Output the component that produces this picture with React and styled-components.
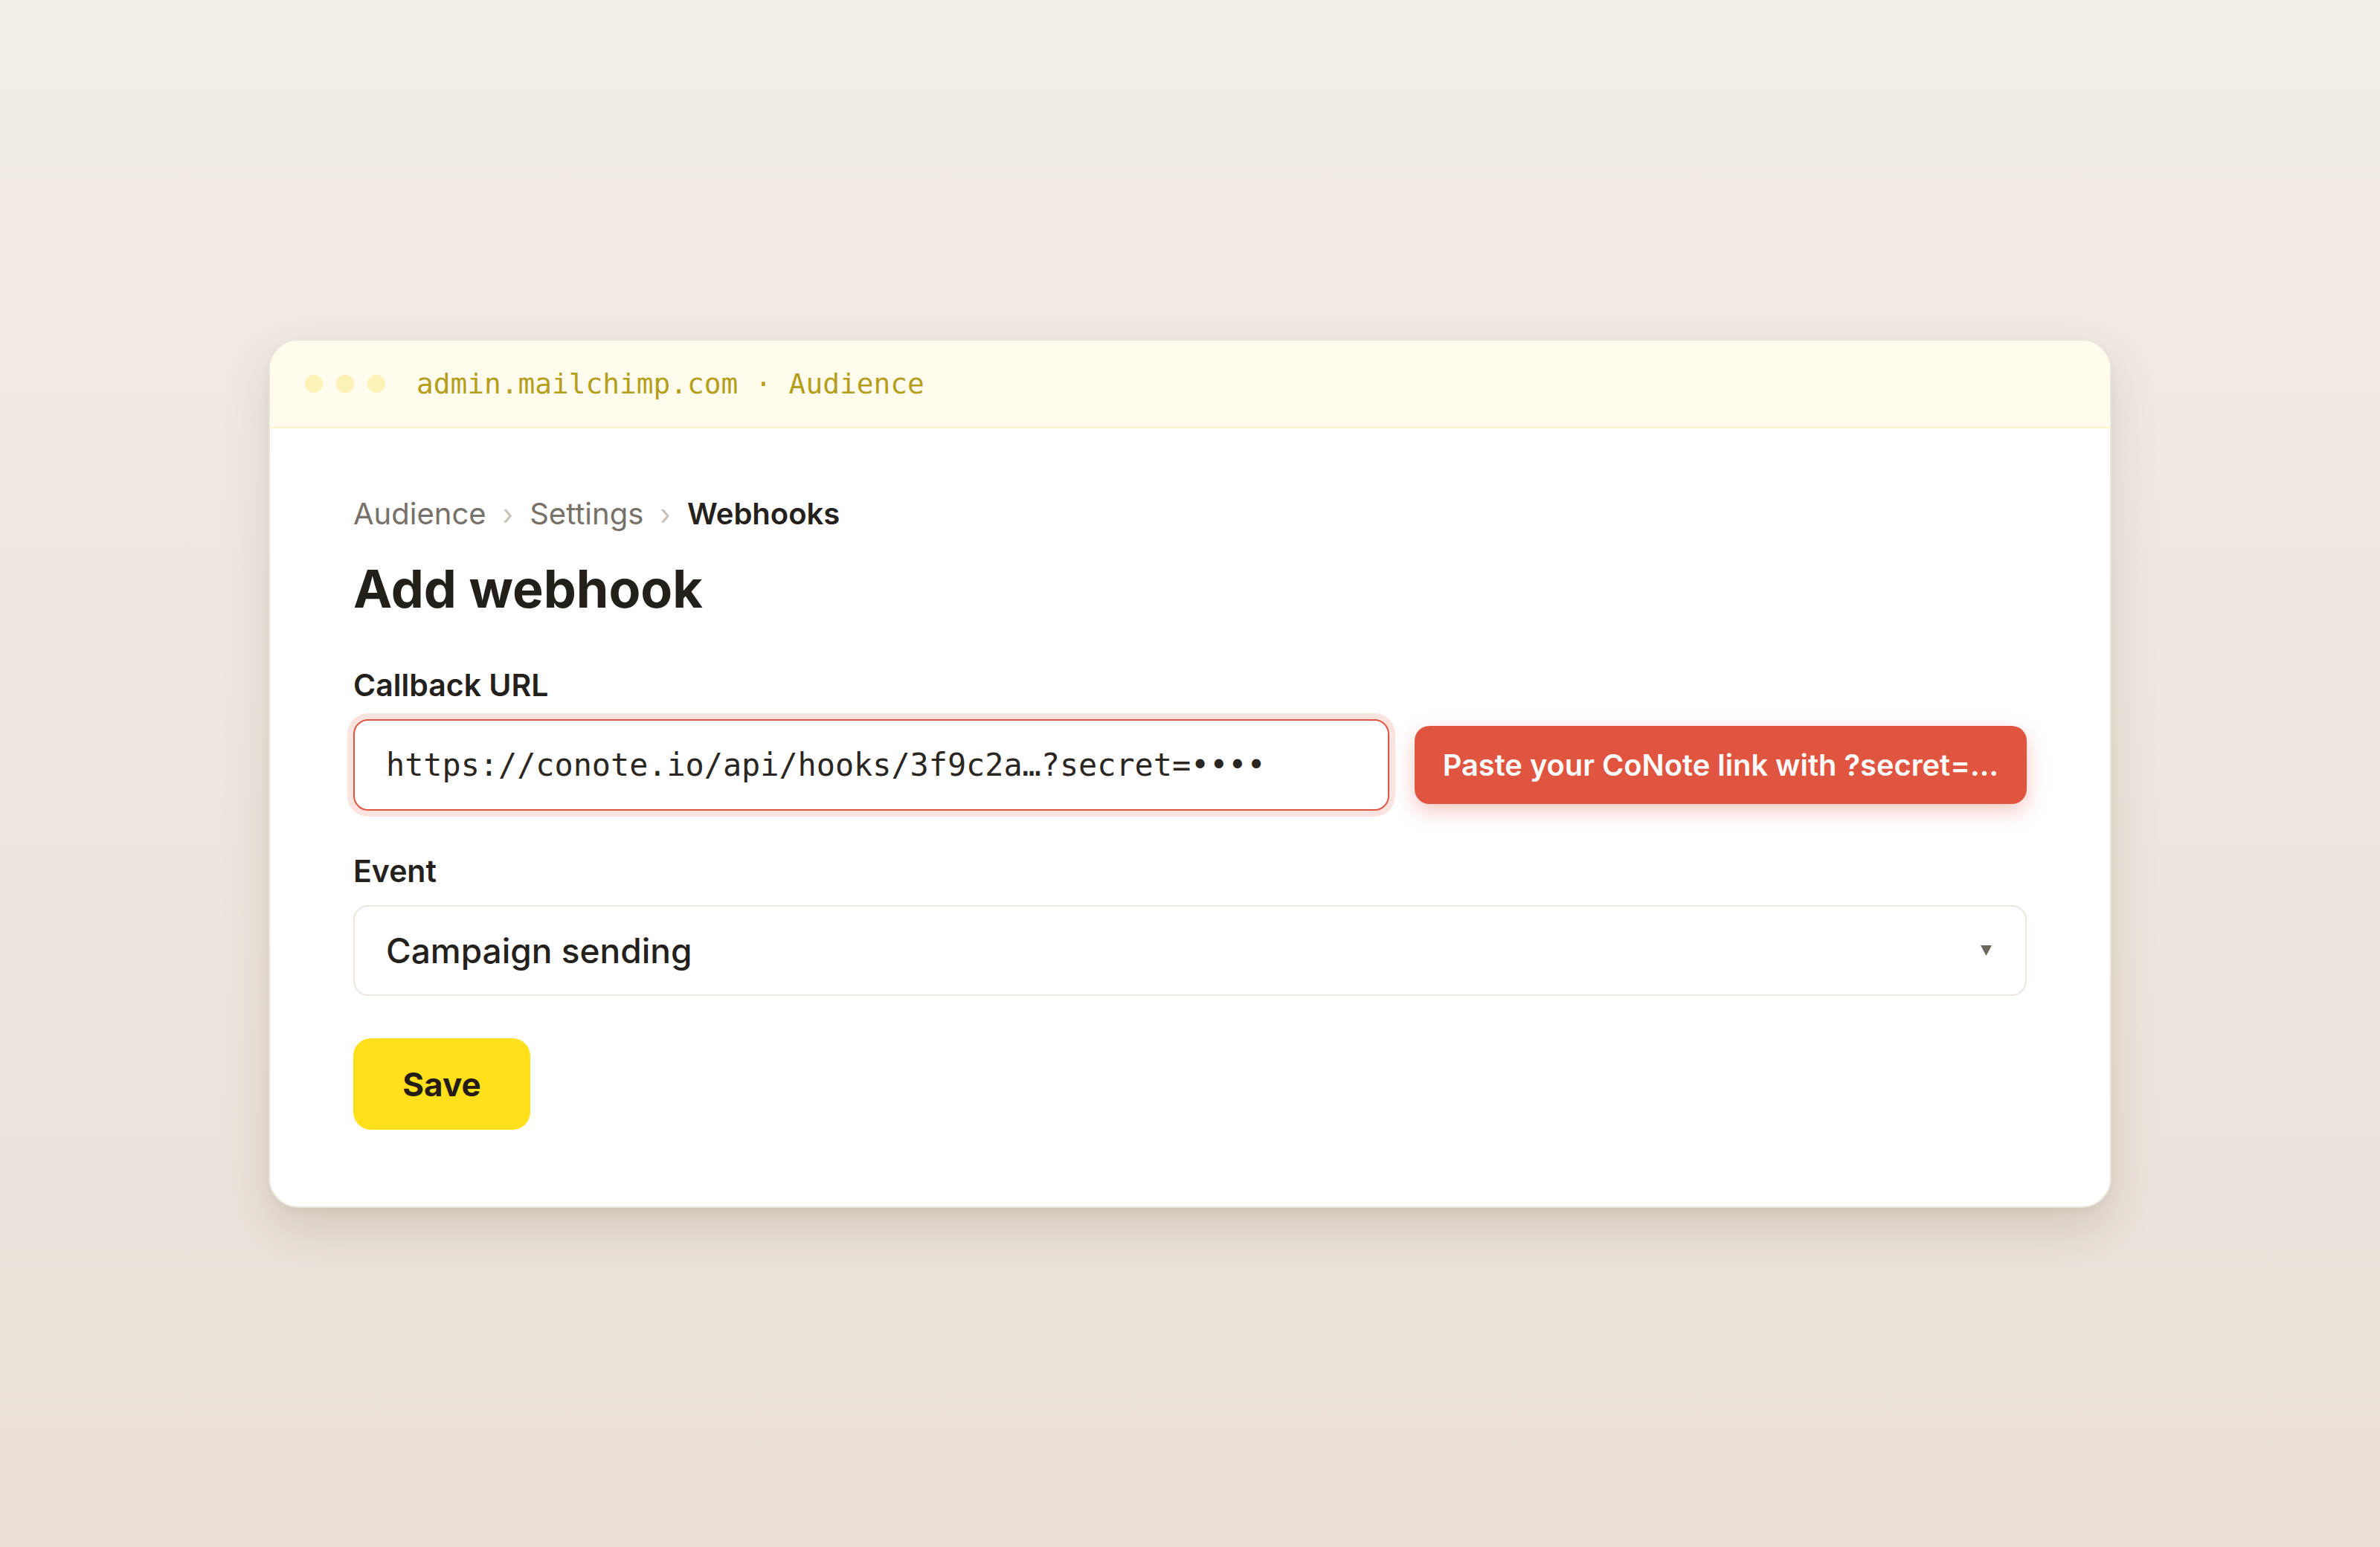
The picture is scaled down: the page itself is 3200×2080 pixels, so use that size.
import React from 'react';
import styled, { createGlobalStyle } from 'styled-components';

const GlobalStyle = createGlobalStyle`
  html, body {
    margin: 0;
    padding: 0;
  }
  body {
    min-height: 100vh;
    background: linear-gradient(180deg, #f2ede6 0%, #ede6dd 55%, #e8e0d5 100%);
    font-family: Inter, "Noto Sans", sans-serif;
    color: #24201b;
  }
`;

const Page = styled.div`
  height: 100vh;
  display: flex;
  align-items: center;
  justify-content: center;
`;

const Window = styled.div`
  width: 2478px;
  box-sizing: border-box;
  background: #fff;
  border: 2px solid #ebe5dc;
  border-radius: 40px;
  overflow: hidden;
  box-shadow: 0 28px 64px rgba(90, 70, 45, 0.16), 0 4px 10px rgba(90, 70, 45, 0.06);
`;

const TitleBar = styled.div`
  height: 116px;
  display: flex;
  align-items: center;
  padding-left: 47px;
  background: #fffcee;
  border-bottom: 2px solid #fbf3cc;
`;

const Dots = styled.div`
  display: flex;
  gap: 18px;
  margin-right: 42px;
`;

const Dot = styled.span`
  width: 24px;
  height: 24px;
  border-radius: 50%;
  background: #fdf2b6;
`;

const Address = styled.span`
  font-family: "DejaVu Sans Mono", "Liberation Mono", monospace;
  font-size: 37.8px;
  color: #b59e1c;
  white-space: pre;
`;

const Body = styled.div`
  padding: 91px 112px 103px;
`;

const Crumbs = styled.nav`
  display: flex;
  align-items: center;
  gap: 22px;
  font-size: 40px;
  line-height: 48px;
`;

const Crumb = styled.span`
  color: ${(p) => (p.$current ? '#24201b' : '#77716a')};
  font-weight: ${(p) => (p.$current ? 600 : 400)};
`;

const Sep = styled.span`
  color: #c8c1b6;
  font-size: 38px;
`;

const Heading = styled.h1`
  margin: 35px 0 0;
  font-size: 70px;
  line-height: 84px;
  font-weight: 700;
  color: #231f1a;
`;

const Field = styled.div`
  margin-top: ${(p) => p.$top}px;
`;

const Label = styled.label`
  display: block;
  font-size: 41px;
  line-height: 48px;
  font-weight: 600;
  color: #24201b;
  margin-bottom: 22px;
`;

const UrlRow = styled.div`
  display: flex;
  align-items: center;
  gap: 34px;
`;

const UrlInput = styled.div`
  flex: 1;
  height: 123px;
  box-sizing: border-box;
  display: flex;
  align-items: center;
  padding: 0 42px;
  border: 2px solid #e0553f;
  border-radius: 20px;
  box-shadow: 0 0 0 8px #fbe4df;
  font-family: "DejaVu Sans Mono", "Liberation Mono", monospace;
  font-size: 41.8px;
  color: #2a2622;
  white-space: pre;
`;

const PasteButton = styled.button`
  height: 105px;
  padding: 0 38px;
  border: none;
  border-radius: 20px;
  background: #e0553f;
  color: #fff;
  font-family: Inter, "Noto Sans", sans-serif;
  font-size: 39.8px;
  font-weight: 600;
  white-space: nowrap;
  box-shadow: 0 10px 28px rgba(224, 85, 63, 0.32);
`;

const Select = styled.div`
  height: 122px;
  box-sizing: border-box;
  display: flex;
  align-items: center;
  justify-content: space-between;
  padding: 0 45px 0 42px;
  border: 2px solid #ece7e0;
  border-radius: 20px;
  font-size: 46px;
  font-weight: 500;
  color: #24201b;
`;

const Caret = () => (
  <svg width="15" height="14" viewBox="0 0 15 14">
    <polygon points="0,0 15,0 7.5,14" fill="#6b665e" />
  </svg>
);

const SaveButton = styled.button`
  margin-top: 57px;
  width: 238px;
  height: 123px;
  border: none;
  border-radius: 24px;
  background: #ffe01b;
  color: #241c15;
  font-family: Inter, "Noto Sans", sans-serif;
  font-size: 44px;
  font-weight: 700;
`;

export default function App() {
  return (
    <>
      <GlobalStyle />
      <Page>
        <Window>
          <TitleBar>
            <Dots>
              <Dot />
              <Dot />
              <Dot />
            </Dots>
            <Address>admin.mailchimp.com · Audience</Address>
          </TitleBar>
          <Body>
            <Crumbs>
              <Crumb>Audience</Crumb>
              <Sep>›</Sep>
              <Crumb>Settings</Crumb>
              <Sep>›</Sep>
              <Crumb $current>Webhooks</Crumb>
            </Crumbs>
            <Heading>Add webhook</Heading>

            <Field $top={63}>
              <Label>Callback URL</Label>
              <UrlRow>
                <UrlInput>https://conote.io/api/hooks/3f9c2a…?secret=••••</UrlInput>
                <PasteButton>Paste your CoNote link with ?secret=…</PasteButton>
              </UrlRow>
            </Field>

            <Field $top={57}>
              <Label>Event</Label>
              <Select>
                <span>Campaign sending</span>
                <Caret />
              </Select>
            </Field>

            <SaveButton>Save</SaveButton>
          </Body>
        </Window>
      </Page>
    </>
  );
}
